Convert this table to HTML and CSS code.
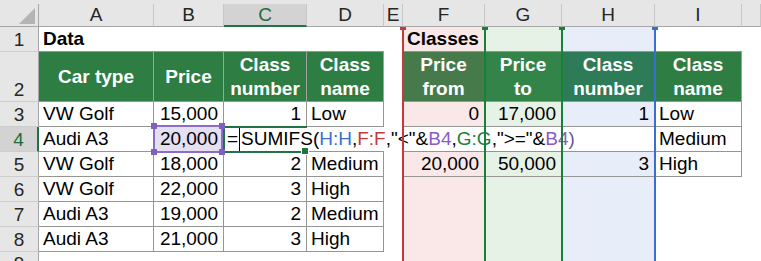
FILE: index.html
```html
<!DOCTYPE html>
<html>
<head>
<meta charset="utf-8">
<link rel="stylesheet" href="styles.css">
</head>
<body>
<div class="wrap">
  <div class="sheet">
    <div class="strip"></div>

    <div class="ch corner"><svg width="39" height="23" viewBox="0 0 39 23"><polygon points="19,20 35,20 35,4" fill="#b4b4b4"/></svg></div>
    <div class="ch">A</div>
    <div class="ch">B</div>
    <div class="ch active-col">C</div>
    <div class="ch">D</div>
    <div class="ch">E</div>
    <div class="ch">F</div>
    <div class="ch">G</div>
    <div class="ch">H</div>
    <div class="ch">I</div>
    <div class="ch"></div>

    <div class="rh">1</div>
    <div class="c tb b">Data</div>
    <div class="c tb"></div>
    <div class="c tb"></div>
    <div class="c tb"></div>
    <div class="c"></div>
    <div class="c tb b pink">Classes</div>
    <div class="c tb mint"></div>
    <div class="c tb sky"></div>
    <div class="c tb"></div>
    <div class="c"></div>

    <div class="rh">2</div>
    <div class="c hd">Car type</div>
    <div class="c hd">Price</div>
    <div class="c hd">Class<br>number</div>
    <div class="c hd">Class<br>name</div>
    <div class="c"></div>
    <div class="c hd hd-f">Price<br>from</div>
    <div class="c hd hd-g">Price<br>to</div>
    <div class="c hd hd-h">Class<br>number</div>
    <div class="c hd">Class<br>name</div>
    <div class="c"></div>

    <div class="rh">3</div>
    <div class="c t">VW Golf</div>
    <div class="c t num">15,000</div>
    <div class="c t num">1</div>
    <div class="c t">Low</div>
    <div class="c"></div>
    <div class="c t num pink">0</div>
    <div class="c t num mint">17,000</div>
    <div class="c t num sky">1</div>
    <div class="c t">Low</div>
    <div class="c"></div>

    <div class="rh active-row">4</div>
    <div class="c t">Audi A3</div>
    <div class="c t num lav">20,000</div>
    <div class="c t num"></div>
    <div class="c t"></div>
    <div class="c"></div>
    <div class="c t num pink"></div>
    <div class="c t num mint"></div>
    <div class="c t num sky"></div>
    <div class="c t">Medium</div>
    <div class="c"></div>

    <div class="rh">5</div>
    <div class="c t">VW Golf</div>
    <div class="c t num">18,000</div>
    <div class="c t num">2</div>
    <div class="c t">Medium</div>
    <div class="c"></div>
    <div class="c t num pink">20,000</div>
    <div class="c t num mint">50,000</div>
    <div class="c t num sky">3</div>
    <div class="c t">High</div>
    <div class="c"></div>

    <div class="rh">6</div>
    <div class="c t">VW Golf</div>
    <div class="c t num">22,000</div>
    <div class="c t num">3</div>
    <div class="c t">High</div>
    <div class="c"></div>
    <div class="c pink"></div>
    <div class="c mint"></div>
    <div class="c sky"></div>
    <div class="c"></div>
    <div class="c"></div>

    <div class="rh">7</div>
    <div class="c t">Audi A3</div>
    <div class="c t num">19,000</div>
    <div class="c t num">2</div>
    <div class="c t">Medium</div>
    <div class="c"></div>
    <div class="c pink"></div>
    <div class="c mint"></div>
    <div class="c sky"></div>
    <div class="c"></div>
    <div class="c"></div>

    <div class="rh">8</div>
    <div class="c t">Audi A3</div>
    <div class="c t num">21,000</div>
    <div class="c t num">3</div>
    <div class="c t">High</div>
    <div class="c"></div>
    <div class="c pink"></div>
    <div class="c mint"></div>
    <div class="c sky"></div>
    <div class="c"></div>
    <div class="c"></div>

    <div class="rh rh-last">9</div>
    <div class="c"></div>
    <div class="c"></div>
    <div class="c"></div>
    <div class="c"></div>
    <div class="c"></div>
    <div class="c pink"></div>
    <div class="c mint"></div>
    <div class="c sky"></div>
    <div class="c"></div>
    <div class="c"></div>
  </div>

  <div class="overlay">
    <div class="hl hl-red"></div>
    <div class="hl hl-green1"></div>
    <div class="hl hl-green2"></div>
    <div class="editor">=<span class="caret"></span>SUMIFS(<span class="f-blue">H:H</span>,<span class="f-red">F:F</span>,"&lt;"&amp;<span class="f-purple">B4</span>,<span class="f-green">G:G</span>,"&gt;="&amp;<span class="f-purple">B4</span><span class="f-paren">)</span></div>
    <div class="hl hl-blue"></div>
    <div class="active"></div>
    <div class="ref-b4"><span class="knob k1"></span><span class="knob k2"></span><span class="knob k3"></span><span class="knob k4"></span></div>
  </div>
</div>
</body>
</html>
```

FILE: styles.css
```css
* { box-sizing: border-box; }
html, body { margin: 0; padding: 0; background: #fff; }
body {
  width: 761px;
  height: 261px;
  overflow: hidden;
  font-family: "Liberation Sans", Arial, sans-serif;
  font-size: 19px;
  color: #000;
}
.wrap {
  display: grid;
  height: 261px;
  overflow: hidden;
}
.sheet, .overlay {
  grid-area: 1 / 1;
  display: grid;
  grid-template-columns: 39px 115px 70px 83px 77px 19px 82px 77px 93px 87px 1fr;
  grid-template-rows: 4px 23px 25px 50px repeat(6, 25px) 1fr;
  line-height: 22px;
  min-height: 0;
}
.overlay { pointer-events: none; }

.strip { grid-column: 1 / -1; background: #e6e6e6; }

.ch {
  background: #e6e6e6;
  border-right: 1px solid #c6c6c6;
  border-bottom: 1px solid #a6a6a6;
  display: flex;
  align-items: center;
  justify-content: center;
  color: #262626;
}
.ch.corner { border-right-color: #a6a6a6; display: block; }
.ch.corner svg { display: block; }
.ch.active-col {
  background: #d3d3d3;
  color: #1e6b3a;
  border-bottom: 2px solid #217346;
}

.rh {
  background: #e6e6e6;
  border-right: 1px solid #a6a6a6;
  border-bottom: 1px solid #cdcdcd;
  display: flex;
  align-items: flex-end;
  justify-content: center;
  color: #262626;
}
.rh.rh-last {
  align-items: flex-start;
  padding-top: 1px;
  border-bottom: 0;
  overflow: hidden;
  min-height: 0;
}
.rh.active-row {
  background: #d3d3d3;
  color: #1e6b3a;
  border-right: 2px solid #217346;
}

.c {
  display: flex;
  align-items: center;
  padding: 0 4px;
  white-space: nowrap;
  background: #fff;
  min-height: 0;
}
.b { font-weight: bold; }
.tb { border-bottom: 1px solid #959595; }
.t {
  border-right: 1px solid #959595;
  border-bottom: 1px solid #959595;
}
.num { justify-content: flex-end; padding-right: 5px; }

.hd {
  background: #2e7d43;
  color: #fff;
  font-weight: bold;
  justify-content: center;
  text-align: center;
  line-height: 24px;
  border-right: 1px solid #a0a0a0;
  border-bottom: 1px solid #959595;
}
.hd-f { background: #467a4b; }
.hd-g { background: #338448; }
.hd-h { background: #2d7b57; }

.pink { background: #fae8e8; }
.mint { background: #e6f2e6; }
.sky { background: #e8eef9; }
.lav { background: #e4dff1; }

/* range highlight borders */
.hl {
  grid-row: 3 / -1;
  justify-self: start;
  width: 2px;
  margin-left: -1px;
  position: relative;
}
.hl::before {
  content: "";
  position: absolute;
  top: 0;
  left: -2px;
  width: 6px;
  height: 3px;
  background: inherit;
}
.hl-red { grid-column: 7; background: #c4393b; }
.hl-green1 { grid-column: 8; background: #17813a; }
.hl-green2 { grid-column: 9; background: #17813a; }
.hl-blue { grid-column: 10; background: #3a6fd0; }

.editor {
  grid-column: 4 / 10;
  grid-row: 6;
  align-self: start;
  height: 24px;
  margin-right: 1px;
  background: #fff;
  padding-left: 3px;
  display: flex;
  align-items: center;
  white-space: pre;
  color: #000;
}
.caret {
  display: inline-block;
  width: 1px;
  height: 23px;
  background: #000;
  margin: 0 1px;
}
.f-blue { color: #3a6fd0; }
.f-red { color: #c4393b; }
.f-purple { color: #8a5cc6; }
.f-green { color: #17813a; }
.f-paren { color: #6a5796; }

.active {
  grid-column: 4;
  grid-row: 6;
  margin: -1px 0 -1px -1px;
  border-left: 2px solid #217346;
  border-top: 2px solid #217346;
  border-bottom: 2px solid #217346;
  position: relative;
}
.active::after {
  content: "";
  position: absolute;
  right: -2px;
  bottom: -4px;
  width: 6px;
  height: 6px;
  background: #217346;
  border: 1px solid #fff;
}

.ref-b4 {
  grid-column: 3;
  grid-row: 6;
  margin: -2px 1px -1px -1px;
  border: 2px solid #8b6cc7;
  position: relative;
}
.knob {
  position: absolute;
  width: 6px;
  height: 6px;
  background: #7f5fbf;
}
.k1 { left: -4px; top: -4px; }
.k2 { right: -4px; top: -4px; }
.k3 { left: -4px; bottom: -4px; }
.k4 { right: -4px; bottom: -4px; }
```
